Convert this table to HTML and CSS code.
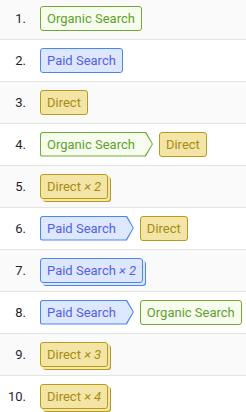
FILE: index.html
```html
<!DOCTYPE html>
<html>
<head>
<meta charset="utf-8">
<link rel="stylesheet" href="styles.css">
</head>
<body>
<div class="list">
  <div class="row odd"><span class="num">1.</span><div class="path"><span class="chip organic">Organic Search</span></div></div>
  <div class="row"><span class="num">2.</span><div class="path"><span class="chip paid">Paid Search</span></div></div>
  <div class="row odd"><span class="num">3.</span><div class="path"><span class="chip direct">Direct</span></div></div>
  <div class="row"><span class="num">4.</span><div class="path"><span class="step organic"><span class="step-in">Organic Search</span></span><span class="chip direct">Direct</span></div></div>
  <div class="row odd"><span class="num">5.</span><div class="path"><span class="chip direct stack">Direct <i class="times">× 2</i></span></div></div>
  <div class="row"><span class="num">6.</span><div class="path"><span class="step paid"><span class="step-in">Paid Search</span></span><span class="chip direct">Direct</span></div></div>
  <div class="row odd"><span class="num">7.</span><div class="path"><span class="chip paid stack">Paid Search <i class="times">× 2</i></span></div></div>
  <div class="row"><span class="num">8.</span><div class="path"><span class="step paid"><span class="step-in">Paid Search</span></span><span class="chip organic">Organic Search</span></div></div>
  <div class="row odd"><span class="num">9.</span><div class="path"><span class="chip direct stack">Direct <i class="times">× 3</i></span></div></div>
  <div class="row"><span class="num">10.</span><div class="path"><span class="chip direct stack">Direct <i class="times">× 4</i></span></div></div>
</div>
</body>
</html>
```
FILE: styles.css
```css
html, body {
  margin: 0;
  padding: 0;
  background: #ffffff;
  font-family: Roboto, "Liberation Sans", Arial, sans-serif;
  font-size: 13px;
}
.list {
  margin-top: -2px;
}
.row {
  display: flex;
  align-items: center;
  height: 41px;
  border-bottom: 1px solid #e4e4e4;
  background: #ffffff;
}
.row.odd {
  background: #fafafa;
}
.num {
  width: 26px;
  text-align: right;
  color: #1f1f2e;
  margin-right: 14px;
  margin-bottom: 1px;
}
.path {
  display: flex;
  align-items: center;
  gap: 6px;
  margin-bottom: 1px;
}
.organic { --bd: #72a83a; --bg: #f7fdee; --fg: #62a02e; }
.paid { --bd: #4a86ef; --bg: #dde8ff; --fg: #5560e6; }
.direct { --bd: #b99b1c; --bg: #f3e5a6; --fg: #a98b12; }
.chip {
  display: inline-block;
  box-sizing: border-box;
  height: 25px;
  line-height: 23px;
  padding: 0 6px;
  border: 1px solid var(--bd);
  border-radius: 3px;
  white-space: nowrap;
  background: var(--bg);
  color: var(--fg);
}
.times {
  font-style: italic;
}
.chip.stack {
  box-shadow: 2px 2px 0 0 var(--bg), 3px 3px 0 0 var(--bd);
  margin-right: 3px;
}
.step {
  display: inline-block;
  box-sizing: border-box;
  height: 25px;
  padding: 1px;
  background: var(--bd);
  border-radius: 3px 0 0 3px;
  clip-path: polygon(0 0, calc(100% - 7px) 0, 100% 50%, calc(100% - 7px) 100%, 0 100%);
}
.step-in {
  display: block;
  height: 23px;
  line-height: 23px;
  padding: 0 17px 0 6px;
  background: var(--bg);
  color: var(--fg);
  border-radius: 2px 0 0 2px;
  white-space: nowrap;
  clip-path: polygon(0 0, calc(100% - 7px) 0, 100% 50%, calc(100% - 7px) 100%, 0 100%);
}
```
